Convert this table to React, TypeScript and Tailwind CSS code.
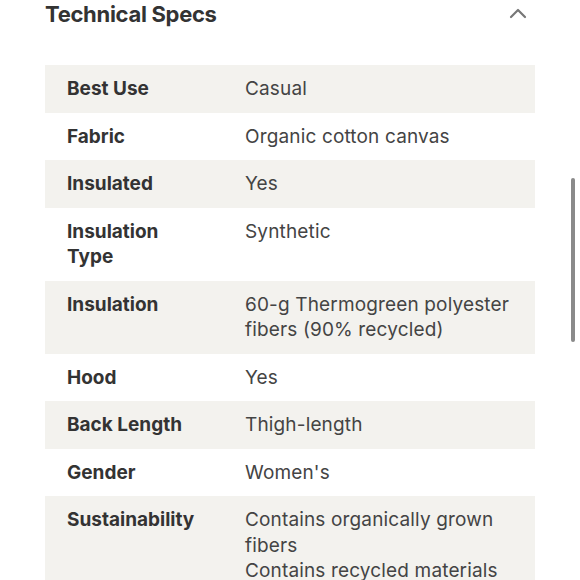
import React from "react";

const rows: { label: string; value: string[] }[] = [
  { label: "Best Use", value: ["Casual"] },
  { label: "Fabric", value: ["Organic cotton canvas"] },
  { label: "Insulated", value: ["Yes"] },
  { label: "Insulation Type", value: ["Synthetic"] },
  { label: "Insulation", value: ["60-g Thermogreen polyester fibers (90% recycled)"] },
  { label: "Hood", value: ["Yes"] },
  { label: "Back Length", value: ["Thigh-length"] },
  { label: "Gender", value: ["Women's"] },
  { label: "Sustainability", value: ["Contains organically grown fibers", "Contains recycled materials"] },
];

export default function App() {
  return (
    <div
      className="relative w-[580px] h-[580px] overflow-hidden bg-white"
      style={{ fontFamily: "Inter, 'Noto Sans', sans-serif" }}
    >
      <div className="pl-[45px] pr-[45px]">
        <div className="flex items-center justify-between h-[28px] mt-0">
          <h2 className="text-[22px] font-bold text-[#333] tracking-[-0.3px] leading-[28px]">Technical Specs</h2>
          <svg width="18" height="12" viewBox="0 0 18 12" className="mr-[8px] mt-[-2px]">
            <path d="M2 10 L9 3 L16 10" fill="none" stroke="#777" strokeWidth="2.2" strokeLinecap="round" strokeLinejoin="round" />
          </svg>
        </div>
        <div className="mt-[37px] flex flex-col">
          {rows.map((r, i) => (
            <div
              key={r.label}
              className={`flex py-[11px] leading-[25.5px] text-[19px] ${i % 2 === 0 ? "bg-[#f3f2ee]" : "bg-white"}`}
            >
              <div className="w-[200px] shrink-0 pl-[22px] pr-[40px] font-bold text-[#333]">{r.label}</div>
              <div className="flex-1 pr-[20px] text-[#444] font-normal tracking-[0.15px]">
                {r.value.map((v) => (
                  <div key={v}>{v}</div>
                ))}
              </div>
            </div>
          ))}
        </div>
      </div>
      <div className="absolute left-[571px] top-[178px] w-[4px] h-[164px] rounded-full bg-[#8a8a8a]" />
    </div>
  );
}
